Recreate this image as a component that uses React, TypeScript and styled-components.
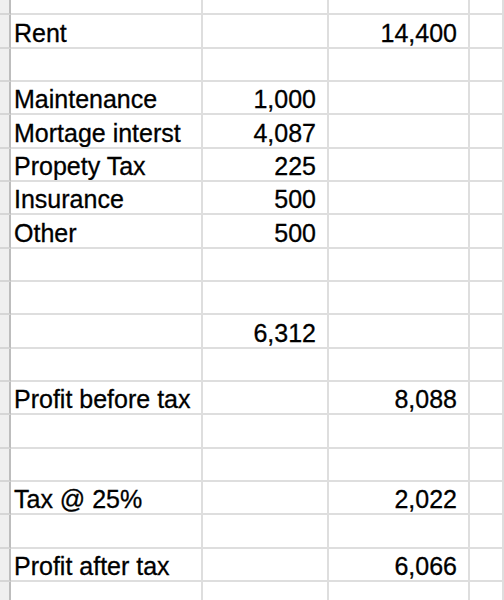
import React from "react";
import styled, { createGlobalStyle } from "styled-components";

const Global = createGlobalStyle`
  html, body { margin: 0; padding: 0; background: #ffffff; }
  body { font-family: "Liberation Sans", Arial, sans-serif; overflow: hidden; }
`;

const Sheet = styled.div`
  display: flex;
  flex-direction: column;
  width: 504px;
  height: 600px;
  overflow: hidden;
  background: #ffffff;
`;

const Row = styled.div<{ $h: number }>`
  display: grid;
  grid-template-columns: 11px 192px 126px 141px 1fr;
  height: ${(p) => p.$h}px;
  flex: 0 0 auto;
`;

const Cell = styled.div<{ $align?: "left" | "right" }>`
  box-sizing: border-box;
  border-right: 2px solid #dedede;
  border-bottom: 2px solid #dedede;
  display: flex;
  align-items: flex-end;
  justify-content: ${(p) => (p.$align === "right" ? "flex-end" : "flex-start")};
  padding: ${(p) => (p.$align === "right" ? "0 11px 1px 0" : "0 0 1px 3px")};
  font-size: 25px;
  line-height: 1;
  color: #000000;
  -webkit-text-stroke: 0.3px #000000;
  white-space: nowrap;
  overflow: hidden;
`;

const RowHead = styled.div`
  box-sizing: border-box;
  background: #efefef;
  border-right: 2px solid #bdbdbd;
  border-bottom: 2px solid #d6d6d6;
`;

type R = [string, string, string];

const rows: R[] = [
  ["Rent", "", "14,400"],
  ["", "", ""],
  ["Maintenance", "1,000", ""],
  ["Mortage interst", "4,087", ""],
  ["Propety Tax", "225", ""],
  ["Insurance", "500", ""],
  ["Other", "500", ""],
  ["", "", ""],
  ["", "", ""],
  ["", "6,312", ""],
  ["", "", ""],
  ["Profit before tax", "", "8,088"],
  ["", "", ""],
  ["", "", ""],
  ["Tax @ 25%", "", "2,022"],
  ["", "", ""],
  ["Profit after tax", "", "6,066"],
  ["", "", ""],
];

const SheetRow: React.FC<{ h: number; data: R }> = ({ h, data }) => (
  <Row $h={h}>
    <RowHead />
    <Cell>{data[0]}</Cell>
    <Cell $align="right">{data[1]}</Cell>
    <Cell $align="right">{data[2]}</Cell>
    <Cell />
  </Row>
);

export default function App() {
  return (
    <>
      <Global />
      <Sheet>
        <SheetRow h={15.3} data={["", "", ""]} />
        {rows.map((r, i) => (
          <SheetRow key={i} h={33.333} data={r} />
        ))}
      </Sheet>
    </>
  );
}
